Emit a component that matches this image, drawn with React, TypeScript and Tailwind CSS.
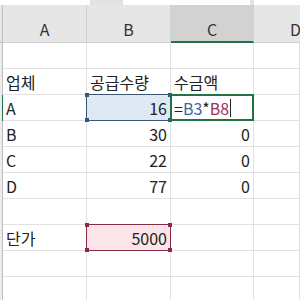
import type { ReactNode } from 'react'

const font = { fontFamily: '"Noto Sans CJK KR", "Noto Sans", sans-serif' }

type CellProps = {
  children?: ReactNode
  right?: boolean
  className?: string
}

function Cell({ children, right, className = '' }: CellProps) {
  return (
    <div
      className={`relative flex h-[26px] items-end border-r border-b border-[#e1e1e1] px-[3px] pb-[2px] text-[16px] leading-[20px] text-[#222] ${
        right ? 'justify-end' : ''
      } ${className}`}
    >
      {children}
    </div>
  )
}

// reference box drawn over a cell while a formula is edited
function RefBox({ border, dot }: { border: string; dot: string }) {
  return (
    <span className={`pointer-events-none absolute -top-px -left-px -right-px -bottom-px border ${border}`}>
      <span className={`absolute -top-[2px] -left-[2px] h-[4px] w-[4px] ${dot}`} />
      <span className={`absolute -top-[2px] -right-[2px] h-[4px] w-[4px] ${dot}`} />
      <span className={`absolute -bottom-[2px] -left-[2px] h-[4px] w-[4px] ${dot}`} />
      <span className={`absolute -bottom-[2px] -right-[2px] h-[4px] w-[4px] ${dot}`} />
    </span>
  )
}

function Row({ children, active }: { children: ReactNode; active?: boolean }) {
  return (
    <>
      <div className={`h-[26px] border-r ${active ? 'border-[#217346]' : 'border-[#bdbdbd]'} bg-[#ececec]`} />
      {children}
    </>
  )
}

export default function App() {
  return (
    <div className="h-[300px] w-[300px] overflow-hidden bg-white" style={font}>
      {/* formula bar edge */}
      <div className="flex h-[5px] bg-[#e3e3e3]">
        <div className="w-[90px] bg-white" />
        <div className="w-[33px]" />
        <div className="w-[127px] bg-white" />
        <div className="w-[4px]" />
        <div className="flex-1 bg-white" />
      </div>

      {/* column headers */}
      <div className="grid grid-cols-[3px_84px_84px_83px_1fr] text-[16px] leading-[20px] text-[#333]">
        <div className="h-[38px] border-r border-b border-[#bdbdbd] bg-[#e6e6e6]" />
        <div className="flex h-[38px] justify-center border-r border-b border-[#cfcfcf] bg-[#e6e6e6] pt-[14px]">A</div>
        <div className="flex h-[38px] justify-center border-r border-b border-[#cfcfcf] bg-[#e6e6e6] pt-[14px]">B</div>
        <div className="flex h-[38px] justify-center border-r border-b-2 border-r-[#cfcfcf] border-b-[#217346] bg-[#d2d2d2] pt-[14px]">C</div>
        <div className="flex h-[38px] border-b border-[#cfcfcf] bg-[#e6e6e6] pl-[36px] pt-[14px]">D</div>
      </div>

      {/* cells */}
      <div className="grid grid-cols-[3px_84px_84px_83px_1fr]">
        <Row>
          <Cell />
          <Cell />
          <Cell />
          <Cell />
        </Row>
        <Row>
          <Cell>업체</Cell>
          <Cell>공급수량</Cell>
          <Cell>수금액</Cell>
          <Cell />
        </Row>
        <Row active>
          <Cell>A</Cell>
          <Cell right className="z-10 bg-[#dfe8f5]">
            16
            <RefBox border="border-[#3c5675]" dot="bg-[#3c5675]" />
          </Cell>
          <div className="z-10 -mt-px -ml-px flex h-[27px] w-[84px] items-end border-2 border-[#217346] bg-white px-[2px] pb-[1px] text-[16px] leading-[20px]">
            <span className="text-[#222]">=</span>
            <span className="text-[#3a6aa0]">B3</span>
            <span className="text-[#222]">*</span>
            <span className="text-[#a3334f]">B8</span>
            <span className="ml-[1px] mb-[1px] h-[18px] w-px bg-[#222]" />
          </div>
          <Cell />
        </Row>
        <Row>
          <Cell>B</Cell>
          <Cell right>30</Cell>
          <Cell right>0</Cell>
          <Cell />
        </Row>
        <Row>
          <Cell>C</Cell>
          <Cell right>22</Cell>
          <Cell right>0</Cell>
          <Cell />
        </Row>
        <Row>
          <Cell>D</Cell>
          <Cell right>77</Cell>
          <Cell right>0</Cell>
          <Cell />
        </Row>
        <Row>
          <Cell />
          <Cell />
          <Cell />
          <Cell />
        </Row>
        <Row>
          <Cell>단가</Cell>
          <Cell right className="z-10 bg-[#fbe5e8]">
            5000
            <RefBox border="border-[#8a2a48]" dot="bg-[#8a2a48]" />
          </Cell>
          <Cell />
          <Cell />
        </Row>
        <Row>
          <Cell />
          <Cell />
          <Cell />
          <Cell />
        </Row>
        <Row>
          <Cell />
          <Cell />
          <Cell />
          <Cell />
        </Row>
      </div>
    </div>
  )
}
